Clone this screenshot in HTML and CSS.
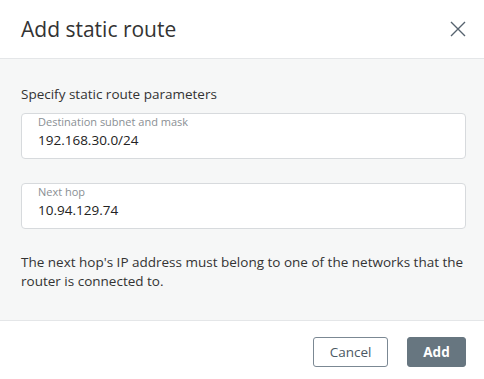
FILE: index.html
```html
<!DOCTYPE html>
<html>
<head>
<meta charset="utf-8">
<link rel="stylesheet" href="styles.css">
</head>
<body>
<div class="dialog">
  <header class="head">
    <h1 class="title">Add static route</h1>
    <button class="close" aria-label="Close">
      <svg width="16" height="16" viewBox="0 0 16 16"><path d="M1 1 L15 15 M15 1 L1 15" stroke="#56636f" stroke-width="1.4" fill="none"/></svg>
    </button>
  </header>
  <main class="body">
    <p class="intro">Specify static route parameters</p>
    <div class="field">
      <span class="label">Destination subnet and mask</span>
      <span class="value">192.168.30.0/24</span>
    </div>
    <div class="field">
      <span class="label">Next hop</span>
      <span class="value">10.94.129.74</span>
    </div>
    <p class="note">The next hop's IP address must belong to one of the networks that the router is connected to.</p>
  </main>
  <footer class="foot">
    <button class="btn btn-cancel">Cancel</button>
    <button class="btn btn-add">Add</button>
  </footer>
</div>
</body>
</html>
```
FILE: styles.css
```css
* { box-sizing: border-box; }
html, body { margin: 0; padding: 0; background: #fff; }
body { font-family: "Open Sans", "Noto Sans", sans-serif; color: #333; width: 484px; height: 379px; overflow: hidden; }
.dialog { display: flex; flex-direction: column; width: 484px; height: 379px; }
.head { height: 59px; display: flex; align-items: center; justify-content: space-between; padding: 0 17px 0 21px; border-bottom: 1px solid #e4e6e8; }
.title { margin: 0; font-size: 21px; font-weight: 400; color: #333; line-height: 28px; }
.close { border: 0; background: none; padding: 0; width: 18px; height: 18px; display: flex; align-items: center; justify-content: center; margin-top: -1px; }
.body { background: #f6f7f7; height: 262px; padding: 26px 18px 0 21px; border-bottom: 1px solid #e4e6e8; }
.intro { margin: 0 0 10px; font-size: 13.5px; line-height: 18px; color: #333; }
.field { display: flex; flex-direction: column; height: 46px; background: #fff; border: 1px solid #d7dadd; border-radius: 4px; padding: 0 14px 0 16px; margin-bottom: 24px; }
.label { font-size: 11px; line-height: 15px; color: #8a8f94; }
.value { font-size: 13.5px; line-height: 22px; color: #222; }
.note { margin: 24px 0 0; font-size: 13.5px; line-height: 19px; color: #333; }
.foot { flex: 1; display: flex; justify-content: flex-end; align-items: flex-start; padding: 16px 18px 0 0; gap: 19px; }
.btn { font-family: "Open Sans", "Noto Sans", sans-serif; font-size: 13.5px; height: 30px; border-radius: 3px; padding: 0; }
.btn-cancel { width: 75px; background: #fff; border: 1px solid #7b8893; color: #4b5864; }
.btn-add { width: 59px; background: #677680; border: 1px solid #677680; color: #fff; font-weight: 700; }
```
